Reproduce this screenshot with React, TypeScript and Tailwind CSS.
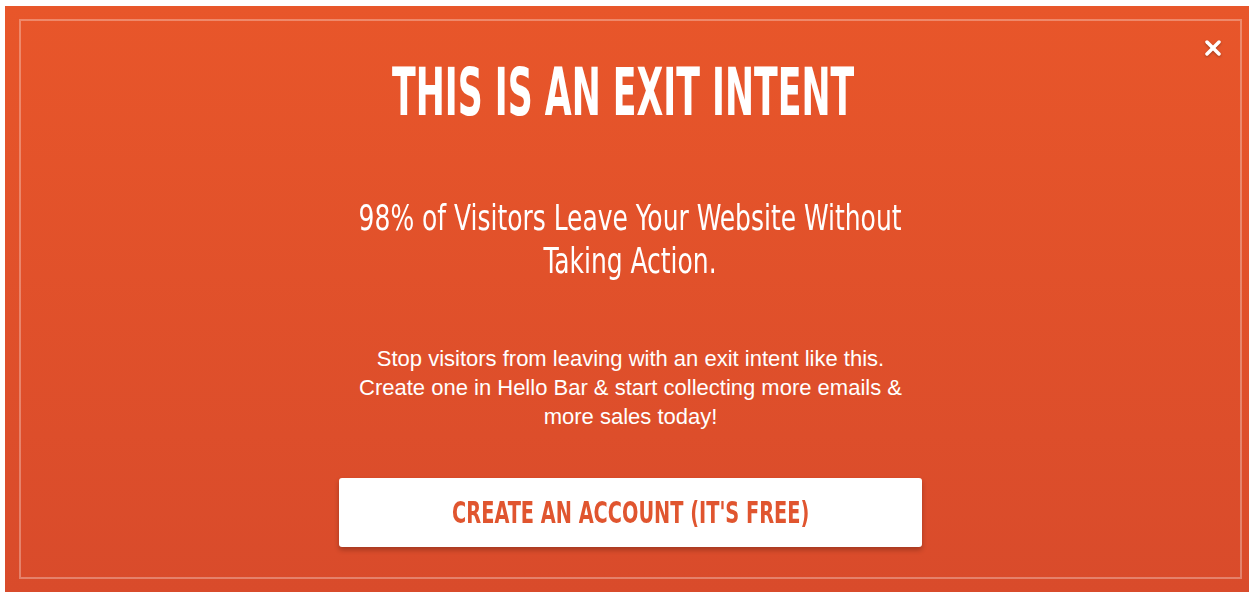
import { X } from 'lucide-react';

const narrow = { fontFamily: '"DejaVu Sans Condensed", "DejaVu Sans", sans-serif' };
const sans = { fontFamily: '"Liberation Sans", Arial, sans-serif' };

export default function App() {
  return (
    <div className="flex h-[592px] w-full bg-white pl-[5px] pt-[6px]">
      {/* Popup */}
      <div className="relative flex flex-1 bg-gradient-to-b from-[#e8562a] to-[#d94b2b] pb-[13px] pl-[14px] pr-[7px] pt-[13px]">
        <button className="absolute right-[24px] top-[30px] text-white drop-shadow-[0_1px_1px_rgba(0,0,0,0.3)]">
          <X className="h-[24px] w-[24px]" strokeWidth={3.5} />
        </button>

        <div className="flex flex-1 flex-col items-center border-2 border-white/30">
          <h1
            style={narrow}
            className="mt-[39px] -translate-x-[7px] scale-x-[0.594] whitespace-nowrap text-[65px] font-bold leading-[65px] text-white"
          >
            THIS IS AN EXIT INTENT
          </h1>

          <h2
            style={narrow}
            className="mt-[71px] scale-x-[0.771] whitespace-nowrap text-center text-[36px] leading-[43px] text-white"
          >
            98% of Visitors Leave Your Website Without
            <br />
            Taking Action.
          </h2>

          <p style={sans} className="mt-[62px] text-center text-[22px] leading-[29px] text-white">
            Stop visitors from leaving with an exit intent like this.
            <br />
            Create one in Hello Bar &amp; start collecting more emails &amp;
            <br />
            more sales today!
          </p>

          <button className="mt-[47px] flex h-[69px] w-[583px] items-center justify-center rounded-[3px] bg-white shadow-[0_3px_5px_rgba(0,0,0,0.25)]">
            <span
              style={narrow}
              className="scale-x-[0.693] whitespace-nowrap text-[31px] font-bold text-[#e0552f]"
            >
              CREATE AN ACCOUNT (IT'S FREE)
            </span>
          </button>
        </div>
      </div>
    </div>
  );
}
